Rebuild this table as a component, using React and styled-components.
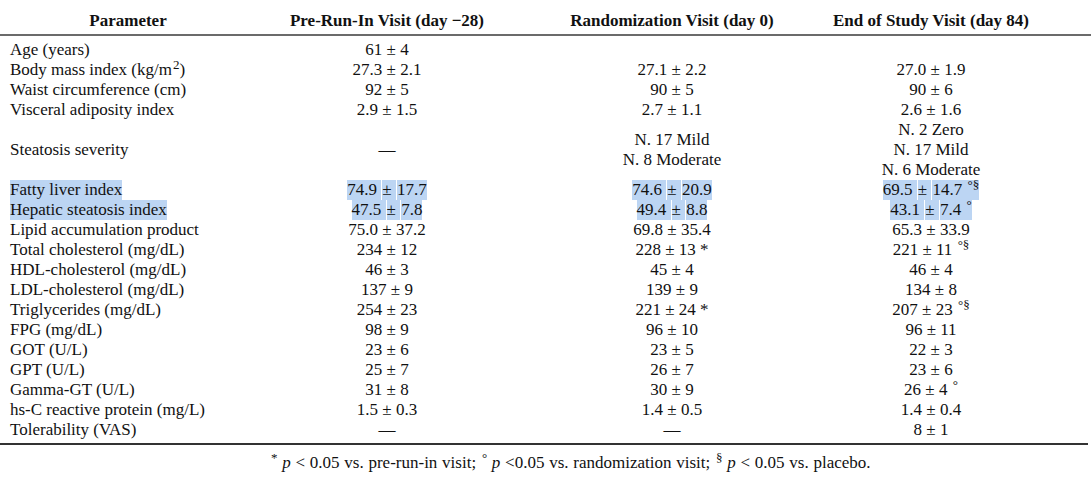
import React from "react";
import styled, { createGlobalStyle } from "styled-components";

const Global = createGlobalStyle`
  html, body { margin: 0; padding: 0; background: #fff; }
  body { font-family: "Liberation Serif", "Times New Roman", serif; color: #111; }
`;

const Page = styled.div`
  width: 1091px;
  height: 481px;
  padding-top: 8px;
  box-sizing: border-box;
  font-size: 17px;
`;

const COLS = "256px 262px 308px 210px 1fr";

const HeaderRow = styled.div`
  display: grid;
  grid-template-columns: ${COLS};
  height: 26px;
  align-items: center;
  font-weight: bold;
  font-size: 17px;
  border-bottom: 2px solid #6b6b6b;
`;

const Body = styled.div`
  padding-top: 4px;
  padding-bottom: 3px;
  margin-right: 3px;
  border-bottom: 2px solid #333;
`;

const Row = styled.div`
  display: grid;
  grid-template-columns: ${COLS};
  align-items: center;
  line-height: 20px;
  min-height: 20px;
`;

const Cell = styled.div`
  text-align: ${(p) => (p.$left ? "left" : "center")};
  padding-left: ${(p) => (p.$left ? "10px" : "0")};
  white-space: nowrap;
`;

const Sup = styled.sup`
  font-size: 13px;
  line-height: 0;
  vertical-align: 6px;
  margin-left: 1px;
`;

const Mark = styled.span`
  background: #bcd5f3;
  display: inline-block;
  line-height: 20px;
`;

const Footnote = styled.div`
  padding-left: 270px;
  margin-top: 8px;
  line-height: 20px;
  font-size: 17px;
  word-spacing: 0.5px;
`;

const Em = styled.i``;

const Gap = styled.span`
  display: inline-block;
  width: 1px;
`;

function Pm({ a, b, mark, tail }) {
  if (mark) {
    return (
      <>
        <Mark>{a}&nbsp;</Mark>
        <Gap />
        <Mark>±&nbsp;</Mark>
        <Gap />
        <Mark>
          {b}
          {tail}
        </Mark>
      </>
    );
  }
  return (
    <>
      {a} ± {b}
      {tail}
    </>
  );
}

const rows = [
  ["Age (years)", ["61", "4"], null, null],
  [
    <>
      Body mass index (kg/m<Sup>2</Sup>)
    </>,
    ["27.3", "2.1"],
    ["27.1", "2.2"],
    ["27.0", "1.9"],
  ],
  ["Waist circumference (cm)", ["92", "5"], ["90", "5"], ["90", "6"]],
  ["Visceral adiposity index", ["2.9", "1.5"], ["2.7", "1.1"], ["2.6", "1.6"]],
];

const rows2 = [
  ["Lipid accumulation product", ["75.0", "37.2"], ["69.8", "35.4"], ["65.3", "33.9"]],
  ["Total cholesterol (mg/dL)", ["234", "12"], ["228", "13", " *"], ["221", "11", "os"]],
  ["HDL-cholesterol (mg/dL)", ["46", "3"], ["45", "4"], ["46", "4"]],
  ["LDL-cholesterol (mg/dL)", ["137", "9"], ["139", "9"], ["134", "8"]],
  ["Triglycerides (mg/dL)", ["254", "23"], ["221", "24", " *"], ["207", "23", "os"]],
  ["FPG (mg/dL)", ["98", "9"], ["96", "10"], ["96", "11"]],
  ["GOT (U/L)", ["23", "6"], ["23", "5"], ["22", "3"]],
  ["GPT (U/L)", ["25", "7"], ["26", "7"], ["23", "6"]],
  ["Gamma-GT (U/L)", ["31", "8"], ["30", "9"], ["26", "4", "o"]],
  ["hs-C reactive protein (mg/L)", ["1.5", "0.3"], ["1.4", "0.5"], ["1.4", "0.4"]],
];

function tailOf(t) {
  if (!t) return null;
  if (t === "os") return <> <Sup>°§</Sup></>;
  if (t === "o") return <> <Sup>°</Sup></>;
  return t;
}

function Val({ v, mark }) {
  if (!v) return null;
  return <Pm a={v[0]} b={v[1]} mark={mark} tail={tailOf(v[2])} />;
}

function DataRow({ r, mark }) {
  return (
    <Row>
      <Cell $left>{mark ? <Mark>{r[0]}</Mark> : r[0]}</Cell>
      <Cell>
        <Val v={r[1]} mark={mark} />
      </Cell>
      <Cell>
        <Val v={r[2]} mark={mark} />
      </Cell>
      <Cell>
        <Val v={r[3]} mark={mark} />
      </Cell>
    </Row>
  );
}

const Lines = styled.div`
  display: flex;
  flex-direction: column;
  align-items: center;
`;

export default function App() {
  return (
    <>
      <Global />
      <Page>
        <HeaderRow>
          <Cell>Parameter</Cell>
          <Cell>Pre-Run-In Visit (day −28)</Cell>
          <Cell>Randomization Visit (day 0)</Cell>
          <Cell>End of Study Visit (day 84)</Cell>
        </HeaderRow>
        <Body>
          {rows.map((r, i) => (
            <DataRow key={i} r={r} />
          ))}
          <Row>
            <Cell $left>Steatosis severity</Cell>
            <Cell>—</Cell>
            <Lines>
              <div>N. 17 Mild</div>
              <div>N. 8 Moderate</div>
            </Lines>
            <Lines>
              <div>N. 2 Zero</div>
              <div>N. 17 Mild</div>
              <div>N. 6 Moderate</div>
            </Lines>
          </Row>
          <DataRow
            mark
            r={["Fatty liver index", ["74.9", "17.7"], ["74.6", "20.9"], ["69.5", "14.7", "os"]]}
          />
          <DataRow
            mark
            r={["Hepatic steatosis index", ["47.5", "7.8"], ["49.4", "8.8"], ["43.1", "7.4", "o"]]}
          />
          {rows2.map((r, i) => (
            <DataRow key={i} r={r} />
          ))}
          <Row>
            <Cell $left>Tolerability (VAS)</Cell>
            <Cell>—</Cell>
            <Cell>—</Cell>
            <Cell>8 ± 1</Cell>
          </Row>
        </Body>
        <Footnote>
          <Sup>*</Sup> <Em>p</Em> &lt; 0.05 vs. pre-run-in visit; <Sup>°</Sup> <Em>p</Em> &lt;0.05 vs.
          randomization visit; <Sup>§</Sup> <Em>p</Em> &lt; 0.05 vs. placebo.
        </Footnote>
      </Page>
    </>
  );
}
